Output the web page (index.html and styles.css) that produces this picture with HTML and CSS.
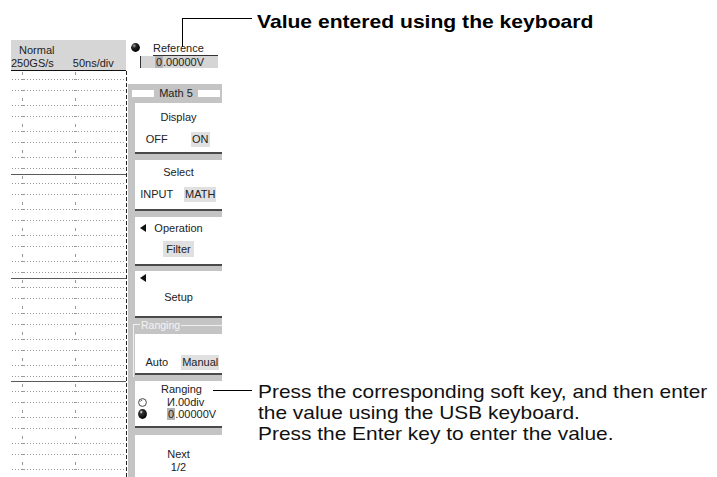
FILE: index.html
```html
<!DOCTYPE html>
<html lang="en">
<head>
<meta charset="utf-8">
<title>Value entry using the keyboard</title>
<link rel="stylesheet" href="styles.css">
</head>
<body>
<div class="page">
  <div class="screen">
    <div class="wave">
      <div class="wave-head">
        <div class="mode">Normal</div>
        <div class="rate"><span>250GS/s</span><span>50ns/div</span></div>
      </div>
      <svg class="grid" width="116" height="406" viewBox="0 0 116 406">
        <defs>
          <pattern id="dots" x="0" y="-1" width="3" height="26" patternUnits="userSpaceOnUse">
            <rect x="1" y="9" width="1" height="1" fill="#9a9a9a"/>
            <rect x="1" y="20" width="1" height="1" fill="#9a9a9a"/>
          </pattern>
          <pattern id="ticks" x="0" y="-1" width="53" height="26" patternUnits="userSpaceOnUse">
            <rect x="11" y="2" width="1" height="3" fill="#999"/>
            <rect x="10" y="9" width="3" height="1" fill="#999"/>
            <rect x="10" y="20" width="3" height="1" fill="#999"/>
          </pattern>
        </defs>
        <rect x="0" y="0" width="115" height="406" fill="url(#dots)"/>
        <rect x="0" y="0" width="115" height="406" fill="url(#ticks)"/>
        <rect x="0" y="103" width="115" height="1" fill="#5a5a5a"/>
        <rect x="0" y="207" width="115" height="1" fill="#5a5a5a"/>
        <rect x="0" y="310" width="115" height="1" fill="#5a5a5a"/>
        <line x1="115.5" y1="0" x2="115.5" y2="406" stroke="#222" stroke-width="1" stroke-dasharray="4 2"/>
      </svg>
    </div>

    <div class="side">
      <div class="ref">
        <div class="ref-top">
          <svg class="knob" width="9" height="9" viewBox="0 0 9 9">
            <defs>
              <radialGradient id="kg1" cx="0.35" cy="0.3" r="0.75">
                <stop offset="0" stop-color="#a0a0a0"/>
                <stop offset="0.35" stop-color="#222"/>
                <stop offset="1" stop-color="#000"/>
              </radialGradient>
            </defs>
            <circle cx="4.5" cy="4.5" r="4.4" fill="url(#kg1)"/>
          </svg>
          <div class="ref-label">Reference</div>
        </div>
        <div class="ref-value"><span class="cur">0</span>.00000V</div>
      </div>

      <div class="panel">
        <div class="panel-title"><span>Math 5</span></div>

        <div class="key k-display">
          <div class="key-title">Display</div>
          <div class="opts"><span>OFF</span><span><span class="hl">ON</span></span></div>
        </div>

        <div class="key k-select">
          <div class="key-title">Select</div>
          <div class="opts"><span>INPUT</span><span><span class="hl">MATH</span></span></div>
        </div>

        <div class="key k-op">
          <div class="tri-row"><i class="tri"></i><span>Operation</span><span></span></div>
          <div class="chip-row"><span class="chip">Filter</span></div>
        </div>

        <div class="key k-setup">
          <div class="tri-only"><i class="tri"></i></div>
          <div class="setup-label">Setup</div>
        </div>

        <div class="group">
          <div class="group-head"><span>Ranging</span></div>
          <div class="group-body">
            <div class="key k-auto">
              <div class="opts"><span>Auto</span><span><span class="hl">Manual</span></span></div>
            </div>
          </div>
        </div>

        <div class="key k-range">
          <div class="range-title">Ranging</div>
          <div class="knob-row">
            <svg class="knob" width="9" height="9" viewBox="0 0 9 9">
              <circle cx="4.5" cy="4.5" r="3.9" fill="#fff" stroke="#333" stroke-width="0.9"/>
              <path d="M2.3 3.6 A2.4 2.4 0 0 1 4.2 2.1" fill="none" stroke="#333" stroke-width="0.8"/>
            </svg>
            <span class="val">И.00div</span>
          </div>
          <div class="knob-row">
            <svg class="knob" width="9" height="10" viewBox="0 0 9 10">
              <defs>
                <radialGradient id="kg2" cx="0.35" cy="0.3" r="0.75">
                  <stop offset="0" stop-color="#ffffff"/>
                  <stop offset="0.25" stop-color="#333"/>
                  <stop offset="1" stop-color="#000"/>
                </radialGradient>
              </defs>
              <ellipse cx="4.5" cy="5" rx="4.4" ry="4.9" fill="url(#kg2)"/>
            </svg>
            <span class="val"><span class="cur">0</span>.00000V</span>
          </div>
        </div>

        <div class="key k-next">
          <div>Next</div>
          <div>1/2</div>
        </div>
      </div>
    </div>
  </div>

  <div class="lead-top"></div>
  <div class="note-top">Value entered using the keyboard</div>

  <div class="lead-bottom"></div>
  <div class="note-bottom">
    <div>Press the corresponding soft key, and then enter</div>
    <div>the value using the USB keyboard.</div>
    <div>Press the Enter key to enter the value.</div>
  </div>
</div>
</body>
</html>
```

FILE: styles.css
```css
* {
  box-sizing: border-box;
  margin: 0;
  padding: 0;
}

html, body {
  width: 717px;
  height: 477px;
  overflow: hidden;
  background: #fff;
}

body {
  font-family: "Liberation Sans", Arial, sans-serif;
  color: #222;
}

.page {
  position: relative;
  width: 717px;
  height: 477px;
  overflow: hidden;
}

/* ---------- instrument screen ---------- */
.screen {
  display: flex;
  height: 477px;
  padding: 40px 0 0 11px;
  font-size: 11px;
}

.wave {
  width: 116px;
  display: flex;
  flex-direction: column;
}

.wave-head {
  height: 31px;
  margin-right: 1px;
  padding-top: 4px;
  line-height: 13px;
  background: #d6d6d6;
  border-bottom: 1px solid #111;
}

.mode {
  padding-left: 8px;
}

.rate {
  display: flex;
  gap: 19px;
}

.grid {
  display: block;
}

.side {
  width: 96px;
  display: flex;
  flex-direction: column;
}

.ref {
  height: 44px;
  padding-top: 3px;
}

.ref-top {
  display: flex;
  align-items: flex-start;
  padding-left: 4px;
}

.knob {
  display: block;
  flex: none;
}

.ref-label {
  flex: 1;
  margin: -1px 5px 0 13px;
  line-height: 13px;
  border-bottom: 1px solid #333;
}

.ref-value {
  margin: 0 5px 0 13px;
  height: 12px;
  line-height: 12px;
  text-align: center;
  background: #d5d5d5;
  border-left: 1px solid #333;
}

.cur {
  background: #b4b4b4;
  padding: 0 1px;
}

/* ---------- soft key panel ---------- */
.panel {
  flex: 1;
  margin: 0 1px;
  padding-top: 2px;
  background: #c4c4c4;
  overflow: hidden;
}

.panel-title {
  display: flex;
  align-items: center;
  height: 14px;
  margin: 0 2px 3px 4px;
  line-height: 14px;
}

.panel-title::before,
.panel-title::after {
  content: "";
  flex: 1;
  height: 7px;
  background: #fff;
}

.panel-title span {
  padding: 0 5px;
}

.key {
  margin-left: 7px;
  background: #fff;
  border-bottom: 2px solid #4a4a4a;
  text-align: center;
  line-height: 14px;
}

.k-display {
  height: 51px;
  padding-top: 7px;
  margin-bottom: 6px;
}

.k-select {
  height: 51px;
  padding-top: 5px;
  margin-bottom: 6px;
}

.k-op {
  height: 49px;
  padding-top: 4px;
  margin-bottom: 5px;
}

.k-setup {
  height: 47px;
  padding-top: 3px;
}

.opts {
  display: grid;
  grid-template-columns: 1fr 1fr;
  margin-top: 8px;
  line-height: 15px;
}

.hl {
  display: inline-block;
  padding: 0 1px;
  background: #e0e0e0;
}

.tri-row {
  display: grid;
  grid-template-columns: 10px 1fr 10px;
  align-items: center;
  padding: 0 5px;
}

.tri {
  display: block;
  width: 0;
  height: 0;
  border-style: solid;
  border-width: 4px 6px 4px 0;
  border-color: transparent #111 transparent transparent;
}

.chip-row {
  margin-top: 6px;
}

.chip {
  display: inline-block;
  padding: 0 3px;
  line-height: 16px;
  background: #e0e0e0;
}

.tri-only {
  height: 8px;
  padding-left: 5px;
}

.setup-label {
  margin-top: 8px;
}

/* Ranging group frame */
.group {
  margin-left: 5px;
}

.group-head {
  display: flex;
  height: 14px;
}

.group-head::before {
  content: "";
  width: 6px;
  height: 7px;
  align-self: flex-end;
  border-top: 1px solid #efefef;
  border-left: 1px solid #efefef;
}

.group-head span {
  padding: 0 1px;
  font-size: 10.5px;
  line-height: 14px;
  color: #f4f4f4;
}

.group-head::after {
  content: "";
  flex: 1;
  align-self: flex-start;
  height: 1px;
  margin-top: 7px;
  background: #efefef;
}

.group-body {
  padding: 2px 0 2px 1px;
  border-left: 1px solid #efefef;
}

.k-auto {
  margin-left: 0;
  height: 41px;
  padding-top: 21px;
}

.k-auto .opts {
  margin-top: 0;
}

.k-range {
  height: 47px;
  margin-top: 4px;
  margin-bottom: 7px;
  padding-top: 2px;
}

.range-title {
  padding-left: 6px;
  line-height: 13px;
}

.knob-row {
  display: flex;
  align-items: center;
  height: 12px;
  padding-left: 3px;
  text-align: left;
}

.val {
  margin-left: 20px;
  line-height: 12px;
}

.k-next {
  height: 60px;
  padding-top: 13px;
  line-height: 13px;
  border-bottom: none;
}

/* ---------- callouts ---------- */
.lead-top {
  position: absolute;
  left: 182px;
  top: 18px;
  width: 70px;
  height: 29px;
  border-top: 1px solid #000;
  border-left: 1px solid #000;
}

.note-top {
  position: absolute;
  left: 257px;
  top: 11px;
  font-weight: bold;
  font-size: 19px;
  line-height: 21px;
  color: #000;
  white-space: nowrap;
  transform: scaleX(1.11);
  transform-origin: 0 0;
}

.lead-bottom {
  position: absolute;
  left: 213px;
  top: 390px;
  width: 39px;
  border-top: 1px solid #000;
}

.note-bottom {
  position: absolute;
  left: 258px;
  top: 381px;
  font-size: 19px;
  line-height: 21px;
  color: #111;
  white-space: nowrap;
  transform: scaleX(1.1);
  transform-origin: 0 0;
}
```
